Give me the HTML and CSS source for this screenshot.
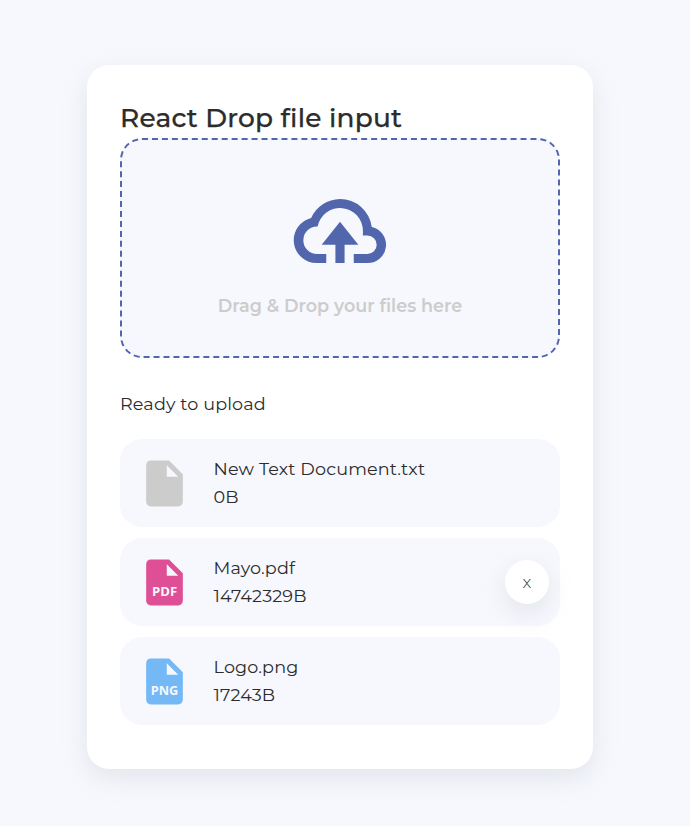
FILE: index.html
```html
<!DOCTYPE html>
<html lang="en">
<head>
<meta charset="utf-8">
<title>React Drop file input</title>
<link rel="stylesheet" href="styles.css">
</head>
<body>
<main class="box">
  <h2 class="header">React Drop file input</h2>
  <div class="drop">
    <svg class="cloud" viewBox="0 0 24 24"><path d="M9 19H7A5 5 0 0 1 5.700 9.150A7 7 0 0 1 12 5A7 7 0 0 1 18.930 11.100A4 4 0 0 1 18 19H15V17H18A2 2 0 0 0 18 13H17V12A5 5 0 0 0 7.100 11H7A3 3 0 0 0 7 17H9ZM12 10L16 15H13V19H11V15H8Z"/></svg>
    <p class="hint">Drag &amp; Drop your files here</p>
  </div>
  <p class="ready">Ready to upload</p>
  <ul class="list">
    <li class="item">
      <svg class="file" viewBox="0 0 24 24"><path fill="#ccc" d="M13 9V4L18 9M6 2C4.890 2 4 2.890 4 4V20A2 2 0 0 0 6 22H18A2 2 0 0 0 20 20V8L14 2Z"/></svg>
      <div class="info"><p>New Text Document.txt</p><p>0B</p></div>
    </li>
    <li class="item">
      <svg class="file" viewBox="0 0 24 24"><path fill="#de4f95" d="M13 9V4L18 9M6 2C4.890 2 4 2.890 4 4V20A2 2 0 0 0 6 22H18A2 2 0 0 0 20 20V8L14 2Z"/><text x="12" y="18" textLength="11" lengthAdjust="spacingAndGlyphs">PDF</text></svg>
      <div class="info"><p>Mayo.pdf</p><p>14742329B</p></div>
      <button class="remove">x</button>
    </li>
    <li class="item">
      <svg class="file" viewBox="0 0 24 24"><path fill="#74b8f6" d="M13 9V4L18 9M6 2C4.890 2 4 2.890 4 4V20A2 2 0 0 0 6 22H18A2 2 0 0 0 20 20V8L14 2Z"/><text x="12" y="18" textLength="12" lengthAdjust="spacingAndGlyphs">PNG</text></svg>
      <div class="info"><p>Logo.png</p><p>17243B</p></div>
    </li>
  </ul>
</main>
</body>
</html>
```

FILE: styles.css
```css
* { box-sizing: border-box; margin: 0; padding: 0; }
body {
  display: flex;
  height: 826px;
  padding: 65px 0 0 87px;
  align-items: flex-start;
  background: #f6f8fd;
  color: #2c2c2c;
  font: 17.6px/28px Montserrat, "Open Sans", sans-serif;
}
.box {
  width: 506px;
  height: 704px;
  padding: 33px;
  background: #fff;
  border-radius: 22px;
  box-shadow: rgba(149, 157, 165, 0.2) 0 9px 26px;
}
.header { font-size: 26.4px; font-weight: 500; line-height: 40px; letter-spacing: 0.22px; -webkit-text-stroke: 0.25px; }
.drop {
  display: flex;
  flex-direction: column;
  align-items: center;
  justify-content: center;
  gap: 6px;
  height: 220px;
  border: 2px dashed #5266ae;
  border-radius: 22px;
  background: #f6f8fd;
}
.cloud { width: 110px; height: 110px; fill: #5266ae; }
.hint { color: #ccc; font-weight: 600; }
.ready { margin: 33px 0 22px; line-height: 26px; letter-spacing: 0.14px; }
.list { display: grid; gap: 11px; list-style: none; }
.item {
  display: flex;
  align-items: center;
  gap: 22px;
  height: 88px;
  padding: 0 11px 0 16.5px;
  border-radius: 22px;
  background: #f6f8fd;
}
.file { width: 55px; height: 55px; }
.file path { fill-rule: evenodd; }
.file text {
  fill: #f6f8fd;
  font: 700 5.3px "Open Sans", sans-serif;
  text-anchor: middle;
}
.info { flex: 1; letter-spacing: 0.15px; }
.remove {
  width: 44px;
  height: 44px;
  border: 0;
  border-radius: 50%;
  background: #fff;
  color: inherit;
  font: 300 17px Montserrat, "Open Sans", sans-serif;
  box-shadow: rgba(149, 157, 165, 0.2) 0 9px 26px;
}
```
